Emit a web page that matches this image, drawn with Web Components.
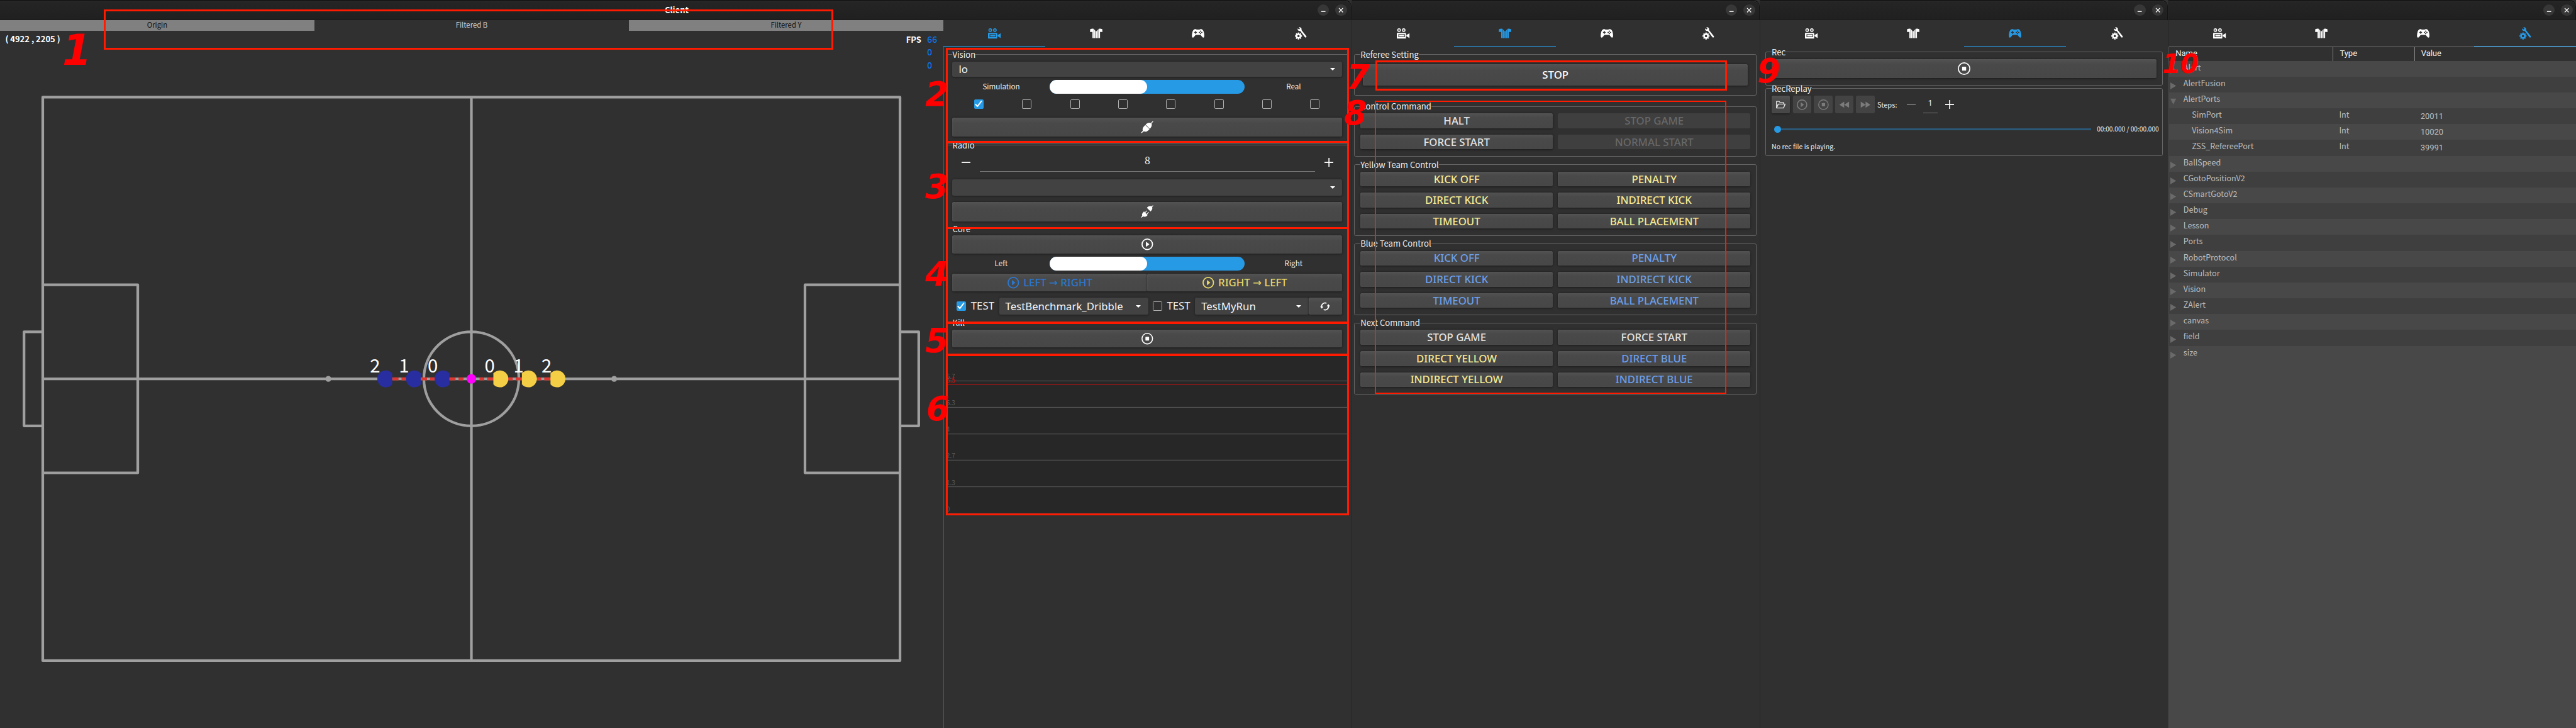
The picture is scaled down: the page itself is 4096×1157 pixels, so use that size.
<!DOCTYPE html>
<html lang="en">
<head>
<meta charset="utf-8">
<title>Client</title>
<style>
html,body{margin:0;padding:0;background:#303030;overflow:hidden}
body{width:4096px;height:1157px}
</style>
</head>
<body>
<z-desktop></z-desktop>
<script>
const define = (name, css, html, after) => customElements.define(name, class extends HTMLElement {
  connectedCallback() {
    if (this.shadowRoot) return;
    const root = this.attachShadow({ mode: 'open' });
    const body = typeof html === 'function' ? html(this) : html;
    root.innerHTML = `<style>*{box-sizing:border-box}:host{box-sizing:border-box;display:block}${css}</style>${body}`;
    if (after) after(this, root);
  }
});

/* ---------- icons ---------- */
const gear = (() => {
  let s = '';
  for (let i = 0; i < 8; i++) s += `<rect x="6.6" y="10.4" width="2.8" height="4" transform="rotate(${i * 45} 8 17)"/>`;
  return s + '<circle cx="8" cy="17" r="3.5" fill="none" stroke="currentColor" stroke-width="2.6"/>';
})();
const ICONS = {
  camera: '<g fill="none" stroke="currentColor" stroke-width="1.7"><circle cx="4.3" cy="5.8" r="2.6"/><circle cx="13" cy="5.8" r="2.6"/></g><circle cx="4.3" cy="5.8" r=".8"/><circle cx="13" cy="5.8" r=".8"/><path fill-rule="evenodd" d="M1 11h15.4a1 1 0 0 1 1 1v8.8a1 1 0 0 1-1 1H1a1 1 0 0 1-1-1V12a1 1 0 0 1 1-1zM3 13.4v5.6h12.2v-5.6zM4.2 14.6h9.8v3.2H4.2z"/><path d="M18.2 15.2 24 11.6v9.3l-5.8-3.5z"/>',
  jersey: '<path d="M.6 3.800 4.600 3 7 3.200V21H4.800V9.300H.200z"/><path d="M23.400 3.800 19.400 3 17 3.200V21h2.200V9.300h4.600z"/><path d="M8 4.600l1.600 2V21H8zM11 7.800h2V21h-2zM16 4.600l-1.600 2V21H16z"/><path opacity=".4" d="M6 3.200 7.600 3.600 12 8.200l4.400-4.600 1.600-.4V21H6z"/>',
  pad: '<path fill-rule="evenodd" d="M5.2 4.1C7 3.4 8.300 3.9 9.300 4.700h5.4c1-.8 2.300-1.300 4.100-.6 2.300.9 3.600 3 4.300 6.700.6 3.300 1 6.400.3 8.100-.4 1-1.500 1.300-2.500.7-1.700-1-3-3.700-4.400-4.600H7.500c-1.400.9-2.700 3.600-4.400 4.600-1 .6-2.100.3-2.500-.7-.7-1.700-.3-4.800.3-8.100.7-3.700 2-5.800 4.300-6.700zM6.300 7.500v1.800H4.500v1.700h1.800v1.800H8V11h1.800V9.300H8V7.500zM16.700 6.500a1.200 1.200 0 1 0 .01 0zM16.700 11.100a1.200 1.200 0 1 0 .01 0zM14.400 8.800a1.200 1.200 0 1 0 .01 0zM19 8.800a1.200 1.200 0 1 0 .01 0z"/>',
  tools: gear + '<path d="M8.6.6c1.900-.8 4.300.2 5 2.200.4 1 .3 1.900 0 2.800l9 11.300c.7 1 .6 2-.1 2.600-.8.6-1.800.4-2.500-.5L11.300 7.500C9.300 7.800 7.300 6.900 6.500 5c-.3-.8-.4-1.500-.2-2.300L9 4.600l1.800-1.300z"/>',
  plug: '<path d="M1.200 23.600.3 22.700 3.700 18.800C2.700 15.600 3.600 12.600 6.800 9.500l1.700-1.600 8 8-1.700 1.700c-2.900 2.900-6.100 3.700-9.100 2.500z"/><path d="M22.800.4l.9.900-3.400 3.900c1.100 3 .2 6.300-2.800 9.500l-.4.400-8-8 .4-.4c3-3 6.300-4 9.500-2.600z"/>',
  unplug: '<path d="M1 23.700.3 22.900l2.300-2.600c-.9-2.700.1-5.200 2.600-7.600l.8-.8 6.900 7-.8.700c-2.300 2.300-5 3-7.500 1.900z"/><path d="m7.900 13.500 3-3.400 1 .9-3 3.400zM11.200 16.300l3-3.400 1 .9-3 3.400zM23 .3l.7.8-2.3 2.600c1 2.500.2 5-2.300 7.500l-.8.800-6.900-7 .8-.7c2.500-2.400 5-3 7.500-1.900z"/>',
  play: '<circle cx="12" cy="12" r="10.800" fill="none" stroke="currentColor" stroke-width="2.300"/><path d="M9.200 6.600 16.300 12l-7.100 5.400z"/>',
  stop: '<circle cx="12" cy="12" r="10.900" fill="none" stroke="currentColor" stroke-width="2"/><rect x="8.200" y="8.200" width="7.600" height="7.600" rx="1"/>',
  refresh: '<g fill="none" stroke="currentColor" stroke-width="2.600"><path d="M4 14.500A8.300 8.300 0 0 1 15.500 4.500M20 9.500A8.300 8.300 0 0 1 8.500 19.500"/></g><path d="M0 12.500h8L4.300 17.500zM24 11.500h-8l3.700-5z"/>',
  folder: '<path fill="none" stroke="currentColor" stroke-width="2" stroke-linejoin="round" d="M2.500 19.500V4.500h6l2 2.500h8v3.500M2.500 19.500 6.500 10.500h15.700l-3.700 9z"/>',
  rew: '<path d="M12 5v14L1 12zM23 5v14l-11-7z"/>',
  fwd: '<path d="M1 5v14l11-7zM12 5v14l11-7z"/>'
};
define('z-icon', ':host{width:24px;height:24px;flex:none}svg{display:block;width:100%;height:100%;overflow:visible}',
  el => `<svg viewBox="0 0 24 24" fill="currentColor">${ICONS[el.getAttribute('name')]}</svg>`);

/* ---------- window chrome ---------- */
define('z-titlebar', `
:host{height:38px;display:flex;align-items:center;padding:0 var(--end,7px) 0 0;background:linear-gradient(#252525,#202020);border-top:1px solid #0a0a0a;border-bottom:1px solid #191919;box-shadow:inset 0 1px #3b3b3b;border-right:1px solid #141414;border-radius:0 12px 0 0}
.t{flex:1;text-align:center;font:700 15.500px/20px "Noto Sans CJK SC",sans-serif;color:#fff;padding-left:80px}
b{width:22px;height:22px;border-radius:50%;background:#373737;display:flex;align-items:center;justify-content:center;margin-left:12px}
svg{width:10px;height:10px;stroke:#fff;stroke-width:1.500;fill:none}`,
  '<div class="t"><slot></slot></div><b><svg viewBox="0 0 10 10"><path d="M1 7.500h8"/></svg></b><b><svg viewBox="0 0 10 10"><path d="M1.200 1l7.600 8M8.800 1 1.200 9"/></svg></b>');

define('z-tabs', `
:host{display:flex;height:50px;color:#fff}
div{flex:1;display:flex;justify-content:center;padding-top:13px;border-bottom:2px solid transparent}
div.on{color:#279ae6;border-color:#279ae6}`,
  el => ['camera', 'jersey', 'pad', 'tools'].map((n, i) => `<div class="${i == el.getAttribute('active') ? 'on' : ''}"><z-icon name="${n}"></z-icon></div>`).join(''));

define('z-window', ':host{height:1379px;overflow:hidden;display:flex;flex-direction:column;border-left:1px solid #262626}:host(:first-of-type){border:0}', '<slot></slot>');

/* ---------- controls ---------- */
define('z-group', `
fieldset{margin:0;min-width:0;height:100%;border:1px solid #666;border-radius:3px;padding:var(--pt,3px) 11px 0}
legend{padding:0;height:21px;font:15.600px/21px "Noto Sans CJK SC",sans-serif;color:#eee;white-space:nowrap}`,
  el => `<fieldset><legend>${el.getAttribute('label')}</legend><slot></slot></fieldset>`);

define('z-button', `
:host{height:28px;display:flex;align-items:center;justify-content:center;gap:8px;padding-top:1px;border-radius:3px;color:#e2e2e2;background:linear-gradient(#525252,#494949 30%,#474747);box-shadow:0 1px 4px rgba(0,0,0,.45),inset 1px 0 3px rgba(255,255,255,.05);font:500 20px/27px "Noto Sans",sans-serif;white-space:nowrap}
:host([icon]){padding-top:0}
:host([tone=yellow]){color:#f5e892}:host([tone=blue]){color:#6c9fe8}
:host([off]){background:#3f3f3f;box-shadow:none;color:#686868}
:host([white]){color:#fff}
::slotted(span){font-family:"DejaVu Sans",sans-serif;font-weight:400;margin:0 -3px}`, '<slot></slot>');

define('z-combo', `
:host{height:32px;display:flex;align-items:center;justify-content:space-between;padding:0 14px 0 12px;border-radius:3px;background:#424242;box-shadow:0 1px 4px rgba(0,0,0,.4);font:20px/28px "Noto Sans",sans-serif;color:#f4f4f4;white-space:nowrap}
i{flex:none;border:5px solid transparent;border-top-color:#fff;border-bottom:0}`, '<span><slot></slot></span><i></i>');

define('z-check', `
:host{width:18px;height:18px;flex:none;border:2px solid #b0b0b0;border-radius:2px}
:host([on]){border-color:#279ae6;background:#279ae6}
svg{display:block;width:14px;height:14px}`,
  el => el.hasAttribute('on') ? '<svg viewBox="0 0 14 14" fill="none" stroke="#fff" stroke-width="2.400"><path d="m1 7.500 4 4.500L13 1.500"/></svg>' : '');

define('z-switch', `
:host{display:flex;height:26px;align-items:center;text-align:center;font:13.800px/26px "Noto Sans CJK SC",sans-serif;color:#eee}
span{flex:1}
div{flex:2;height:26px;border-radius:13px;background:#279ae6}
i{display:block;width:50%;height:26px;border-radius:13px;background:#fff}`,
  el => `<span>${el.getAttribute('left')}</span><div><i></i></div><span>${el.getAttribute('right')}</span>`);

define('z-spin', `
:host{display:flex;align-items:center}
svg{width:17px;height:17px;flex:none;stroke:#fff;stroke-width:2;fill:none}
.dim{stroke:#777}
div{height:100%;border-bottom:1px solid #777;text-align:center;color:#eee}
`, el => `<svg class="${el.hasAttribute('min') ? 'dim' : ''}" viewBox="0 0 17 17"><path d="M0 8.500h17"/></svg><div part="value"><slot></slot></div><svg viewBox="0 0 17 17"><path d="M0 8.500h17M8.500 0v17"/></svg>`);

/* ---------- soccer field ---------- */
define('z-field', 'svg{display:block}', () => {
  const dash = [[743.2, 755], [760.6, 769.5], [798.300, 809], [814.600, 824], [851.600, 863], [868.600, 878.200], [908.500, 917.400], [922.600, 935.500], [962.600, 971.400], [977, 988.500], [1017, 1025.500], [1031, 1043.200]];
  const bot = (cx, col, d) => { const k = 12.300 * d, h = 10.250; return `<path fill="${col}" d="M${cx + k} ${718 - h}A16 16 0 1 ${d > 0 ? 0 : 1} ${cx + k} ${718 + h}z"/>`; };
  const num = (x, n) => `<text x="${x}" y="705.500">${n}</text>`;
  return `<svg width="1787" height="1319" viewBox="0 59 1787 1319">
  <g fill="none" stroke="#9f9f9f" stroke-width="5" stroke-linejoin="round">
  <rect x="81" y="184.500" width="1624" height="1067"/><path d="M893 184.500v1067M81 718h1624"/><ellipse cx="893" cy="718" rx="90" ry="89"/>
  <path d="M81 540h180v356H81M81 629H45.500v178H81M1705 540h-180v356h180M1705 629h35.500v178H1705"/></g>
  <circle cx="622" cy="718" r="5.500" fill="#9f9f9f"/><circle cx="1163.500" cy="718" r="5.500" fill="#9f9f9f"/>
  <path stroke="#dc3833" stroke-width="5.600" d="${dash.map(([a, b]) => `M${a} 718H${b}`).join('')}"/>
  ${bot(730.800, '#282ea0', 1)}${bot(785, '#282ea0', 1)}${bot(839.300, '#282ea0', 1)}${bot(947, '#f4cf46', -1)}${bot(1001, '#f4cf46', -1)}${bot(1055.200, '#f4cf46', -1)}
  <circle cx="893" cy="718" r="9" fill="#f0f"/>
  <g fill="#fff" text-anchor="middle" font-family="Noto Sans CJK SC, sans-serif" font-size="35">${num(710.500, 2)}${num(765.500, 1)}${num(819.800, 0)}${num(927.800, 0)}${num(982.500, 1)}${num(1035.500, 2)}</g>
  <g fill="#fff" font-family="Noto Sans CJK SC, sans-serif" font-weight="700"><text x="10" y="80" font-size="15.500">( 4922 , 2205 )</text><text x="1716.500" y="81.500" font-size="15.500">FPS</text></g>
  <g fill="#0a78f0" font-family="Noto Sans CJK SC, sans-serif" font-weight="500" font-size="16.500"><text x="1756.500" y="82">66</text><text x="1756.500" y="106">0</text><text x="1756.500" y="130">0</text></g>
  </svg>`;
});

define('z-layers', `
:host{display:flex;height:20px;font:13.500px/19px "Noto Sans CJK SC",sans-serif;text-align:center}
div{flex:1;background:#808080;color:#111}div:nth-of-type(2){background:#303030;color:#ccc}`,
  '<div>Origin</div><div>Filtered B</div><div>Filtered Y</div>');

/* ---------- packet chart ---------- */
define('z-chart', 'svg{display:block;background:#272727}', () => {
  const rows = [[50.500, '6.7'], [100.500, '5.3'], [151, '4'], [200.500, '2.7'], [251, '1.3'], [301.500, '0']];
  return `<svg width="763" height="304" viewBox="0 0 763 304" font-family="Noto Sans CJK SC, sans-serif" font-size="12">
  ${rows.map(([y, t], i) => `<path stroke="#666" d="M0 ${y}H763"/><text fill="#5c5c5c" x="1" y="${46.500 + i * 50.200}">${t}</text>`).join('')}
  <path stroke="#e01010" d="M0 57.500H763"/><text fill="#d01010" x="1" y="54">6.5</text></svg>`;
});

/* ---------- parameter tree ---------- */
define('z-tree', `
:host{flex:1;display:flex;flex-direction:column;font:15px/23.500px "Noto Sans CJK SC",sans-serif;color:#bdbdbd;border-left:1px solid #555;overflow:hidden}
.h,.r{display:grid;grid-template-columns:310px 154px 1fr;flex:none}
.h{height:27px;border-top:1px solid #777;color:#f2f2f2;font:15.500px/25px Roboto,sans-serif;background:#303030}
.h>*{padding-left:12px}.h>*+*{border-left:1px solid #888}
.r{height:30px;background:#3f3f3f}.r:nth-child(odd){background:#484848}
.fill{flex:1;background:#484848}
.n{display:flex}.n i{width:16px;margin-right:11px;padding:11px 0 0 2px}.n.c{padding-left:16px}
svg{display:block;width:11px;height:13px;fill:#6a6a6a}
.r>*+*{padding-left:12px}.v{font-family:Roboto,sans-serif;font-size:15.500px;padding-top:3px}`, () => {
  const items = ['Alert', 'AlertFusion', '-AlertPorts', ['SimPort', 20011], ['Vision4Sim', 10020], ['ZSS_RefereePort', 39991], 'BallSpeed', 'CGotoPositionV2', 'CSmartGotoV2', 'Debug', 'Lesson', 'Ports', 'RobotProtocol', 'Simulator', 'Vision', 'ZAlert', 'canvas', 'field', 'size'];
  const out = items.map(t => Array.isArray(t)
    ? `<div class="r"><div class="n c"><i></i>${t[0]}</div><div>Int</div><div class="v">${t[1]}</div></div>`
    : `<div class="r"><div class="n"><i><svg viewBox="0 0 11 13"><path d="${t[0] == '-' ? 'M0 1h11L5.500 12z' : 'M0 0v13l11-6.500z'}"/></svg></i>${t.replace('-', '')}</div></div>`);
  return '<div class="h"><div>Name</div><div>Type</div><div>Value</div></div>' + out.join('') + '<div class="fill"></div>';
});

/* ---------- annotation overlay ---------- */
define('z-marks', `
:host{position:absolute;left:0;top:0;width:4880px;height:1379px;overflow:hidden}
i{position:absolute;border:4px solid #ff1a00}
b{position:absolute;color:#f00;font:italic 700 62px/62px "DejaVu Sans",sans-serif}`, () => {
  const boxes = [[197, 18, 1382, 76], [1792, 91, 763, 180], [1792, 267, 763, 167], [1792, 430, 763, 183], [1792, 609, 763, 65], [1792, 670, 763, 306], [2606, 114, 666, 57], [2604, 191, 667, 555]];
  const nums = [[1, 118, 56, 80], [2, 1753, 148, 63], [3, 1753, 323, 63], [4, 1753, 488, 63], [5, 1753, 615, 63], [6, 1755, 743, 63], [7, 2551, 115, 63], [8, 2546, 184, 63], [9, 3329, 104, 63], [10, 4096, 97, 50]];
  return boxes.map(([x, y, w, h], i) => `<i style="left:${x}px;top:${y}px;width:${w}px;height:${h}px${i == 7 ? ';border-width:3.500px 3px' : ''}"></i>`).join('')
    + nums.map(([n, x, y, s]) => `<b style="left:${x}px;top:${y}px;font-size:${s}px;line-height:${s}px">${n}</b>`).join('');
});

/* ---------- panels ---------- */
define('z-connect', `
:host{flex:1;display:flex;flex-direction:column;padding:5px 5px 0 4px;border-left:1px solid #555}
:host>*{flex:none}
.checks{display:flex;gap:73px;padding:11px 0 0 41px;height:46px}
.row{display:flex}.row>z-button{flex:1}
.test{display:flex;align-items:center;margin-top:12px;font:20px/32px "Noto Sans",sans-serif;color:#eee}
.test span{margin:0 9px 0 9px}
z-spin{height:42px;padding:2px 17px 0;justify-content:space-between}
z-spin::part(value){width:635px;height:37px;font:19px/32px "Noto Sans CJK SC",sans-serif}`, `
<z-group label="Vision" style="height:180px"><z-combo style="height:28px">lo</z-combo><z-switch left="Simulation" right="Real" style="margin-top:6px"></z-switch>
<div class="checks"><z-check on></z-check>${'<z-check></z-check>'.repeat(7)}</div><z-button icon white style="height:36px"><z-icon name="plug"></z-icon></z-button></z-group>
<z-group label="Radio" style="height:170px;margin-top:-9px;--pt:0px"><z-spin>8</z-spin><z-combo style="margin-top:12px"></z-combo><z-button icon white style="height:36px;margin-top:12px"><z-icon name="unplug"></z-icon></z-button></z-group>
<z-group label="Core" style="height:190px;margin-top:-11px;--pt:2px"><z-button icon white style="height:34px"><z-icon name="play" style="width:22px;height:22px"></z-icon></z-button>
<z-switch left="Left" right="Right" style="margin-top:6px"></z-switch>
<div class="row" style="margin-top:6px"><z-button icon style="height:34px;color:#2b78cf"><z-icon name="play" style="width:22px;height:22px"></z-icon>LEFT <span>→</span> RIGHT</z-button><z-button icon style="height:34px;color:#e6d76a"><z-icon name="play" style="width:22px;height:22px"></z-icon>RIGHT <span>→</span> LEFT</z-button></div>
<div class="test"><z-check on style="margin-left:8px"></z-check><span>TEST</span><z-combo style="width:283px">TestBenchmark_Dribble</z-combo><z-check style="margin-left:8px"></z-check><span>TEST</span><z-combo style="flex:1">TestMyRun</z-combo><z-button icon white style="width:64px;height:32px"><z-icon name="refresh" style="width:19px;height:19px"></z-icon></z-button></div></z-group>
<z-group label="Kill" style="height:70px;margin-top:-12px;--pt:2px"><z-button icon white style="height:34px"><z-icon name="stop" style="width:22px;height:22px"></z-icon></z-button></z-group>
<z-chart></z-chart>`);

const grid = list => `<div class="g">${list.map(([t, a = '']) => `<z-button ${a}>${t}</z-button>`).join('')}</div>`;
const Y = 'tone="yellow"', B = 'tone="blue"';
const team = c => grid([['KICK OFF', c], ['PENALTY', c], ['DIRECT KICK', c], ['INDIRECT KICK', c], ['TIMEOUT', c], ['BALL PLACEMENT', c]]);
define('z-referee', `
:host{padding:5px 5px 0 4px}
.g{display:grid;grid-template-columns:1fr 1fr;gap:12px 10px}`, `
<z-group label="Referee Setting" style="height:88px;--pt:8px"><z-button white style="height:40px;margin:0 5px">STOP</z-button></z-group>
<z-group label="Control Command" style="height:106px;margin-top:10px">${grid([['HALT'], ['STOP GAME', 'off'], ['FORCE START'], ['NORMAL START', 'off']])}</z-group>
<z-group label="Yellow Team Control" style="height:146px;margin-top:4px">${team(Y)}</z-group>
<z-group label="Blue Team Control" style="height:146px;margin-top:4px">${team(B)}</z-group>
<z-group label="Next Command" style="height:146px;margin-top:4px">${grid([['STOP GAME'], ['FORCE START'], ['DIRECT YELLOW', Y], ['DIRECT BLUE', B], ['INDIRECT YELLOW', Y], ['INDIRECT BLUE', B]])}</z-group>`);

define('z-replay', `
:host{padding:0 10px;font:13.200px/20px "Noto Sans CJK SC",sans-serif;color:#eee}
.bar{display:flex;gap:5px;align-items:center;height:34px}
.bar z-button{width:35px;height:34px}
.bar z-icon{width:20px;height:20px}
z-spin{height:34px;gap:14px;margin-left:13px}
z-spin::part(value){width:28px;height:32px;font:15.500px/26px "Noto Sans",sans-serif}
.time{display:flex;align-items:center;margin:20px -5px 0 5px;height:20px}
.dot{width:13px;height:13px;border-radius:50%;background:#279ae6}
.track{flex:1;height:4px;background:#2c5878;margin-right:11px}
.t{font-size:12.100px}`, `
<z-group label="Rec" style="height:74px"><z-button icon white style="height:36px"><z-icon name="stop"></z-icon></z-button></z-group>
<z-group label="RecReplay" style="height:138px;margin-top:-5px">
<div class="bar"><z-button icon><z-icon name="folder"></z-icon></z-button>${['play', 'stop', 'rew', 'fwd'].map(n => `<z-button icon off style="background:#434343;color:#7b7b7b"><z-icon name="${n}"></z-icon></z-button>`).join('')}<span>Steps:</span><z-spin min>1</z-spin></div>
<div class="time"><div class="dot"></div><div class="track"></div><div class="t">00:00.000 / 00:00.000</div></div>
<div style="margin-top:13px;font-size:12.600px">No rec file is playing.</div></z-group>`);

define('z-desktop', `
:host{position:relative;width:4880px;height:1379px;zoom:.83934;overflow:hidden;background:#303030}
.wins{display:grid;grid-template-columns:2560px 773px 774px 773px}
.main{display:flex;flex:1}.left{width:1787px}.right{width:773px;display:flex;flex-direction:column}`, `
<div class="wins">
<z-window><z-titlebar>Client</z-titlebar><div class="main"><div class="left"><z-layers></z-layers><z-field></z-field></div><div class="right"><z-tabs active="0"></z-tabs><z-connect></z-connect></div></div></z-window>
<z-window><z-titlebar></z-titlebar><z-tabs active="1"></z-tabs><z-referee></z-referee></z-window>
<z-window><z-titlebar></z-titlebar><z-tabs active="2"></z-tabs><z-replay></z-replay></z-window>
<z-window><z-titlebar style="--end:5px"></z-titlebar><z-tabs active="3"></z-tabs><z-tree></z-tree></z-window>
</div><z-marks></z-marks>`);
</script>
</body>
</html>
